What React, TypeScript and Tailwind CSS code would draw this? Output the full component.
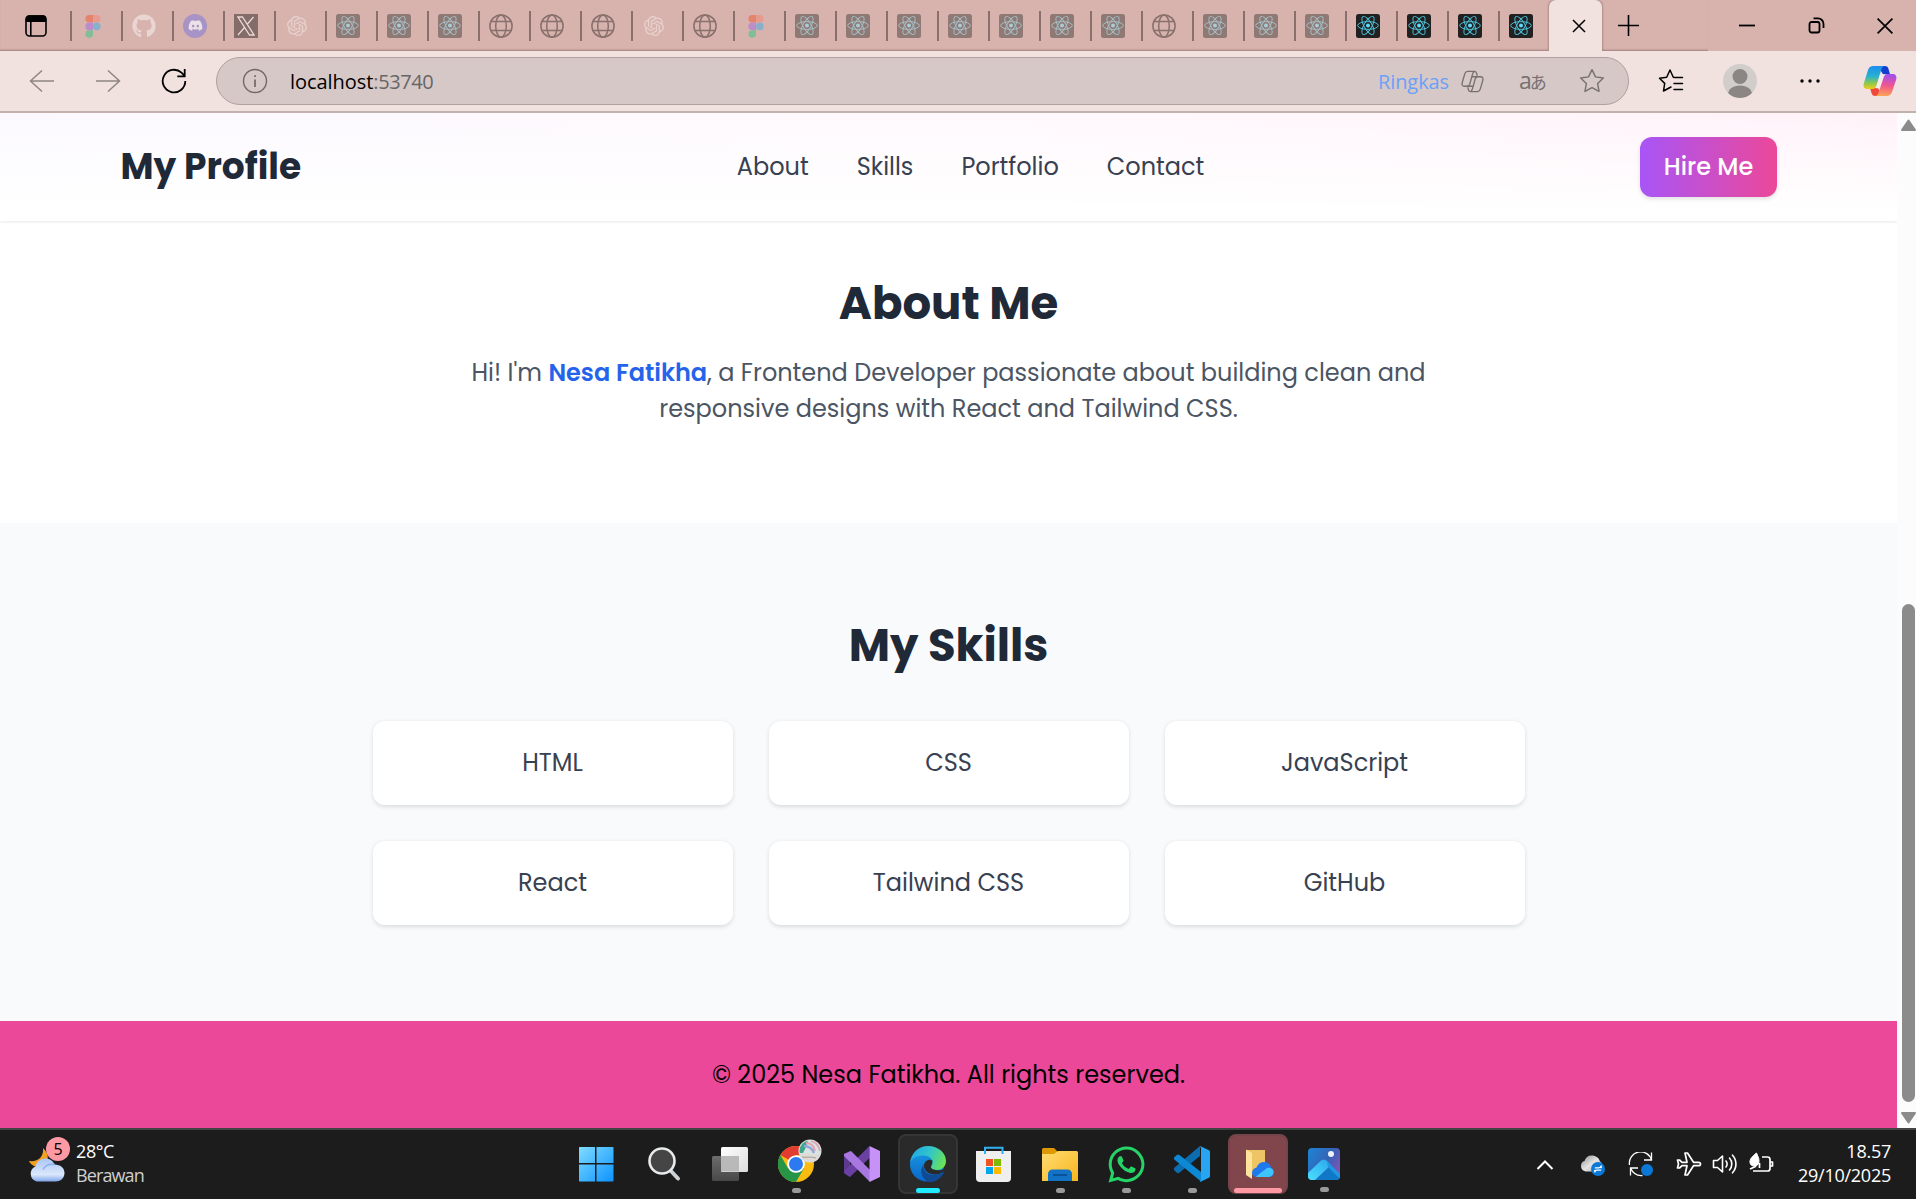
import type { ReactNode } from "react";
import { SiOpenai } from "react-icons/si";
import { FaGithub, FaDiscord, FaWhatsapp } from "react-icons/fa6";

/* ---------- tab favicons ---------- */

function ReactFavicon({ live }: { live?: boolean }) {
  return (
    <svg width="24" height="24" viewBox="0 0 24 24" fill="none">
      <rect width="24" height="24" rx="2.5" fill={live ? "#212121" : "#8f7975"} />
      <g stroke={live ? "#4cc3dc" : "#a5bfc6"} strokeWidth="0.95">
        <ellipse cx="12" cy="11.5" rx="10.3" ry="3.9" />
        <ellipse cx="12" cy="11.5" rx="10.3" ry="3.9" transform="rotate(60 12 11.5)" />
        <ellipse cx="12" cy="11.5" rx="10.3" ry="3.9" transform="rotate(120 12 11.5)" />
      </g>
      <circle cx="12" cy="11.5" r="2" fill={live ? "#61dafb" : "#a9ccd6"} />
    </svg>
  );
}

function GlobeFavicon() {
  return (
    <svg width="24" height="24" viewBox="0 0 24 24" fill="none" stroke="#89706c" strokeWidth="1.5">
      <circle cx="12" cy="12" r="11.1" />
      <ellipse cx="12" cy="12" rx="5.3" ry="11.1" />
      <path d="M1.9 7.6h20.2M1.9 16.4h20.2" />
    </svg>
  );
}

function FigmaFavicon() {
  return (
    <svg width="24" height="24" viewBox="0 0 24 24">
      <path d="M12 1H8.2a3.8 3.8 0 0 0 0 7.6H12z" fill="#e4846c" />
      <path d="M12 1h3.8a3.8 3.8 0 0 1 0 7.6H12z" fill="#e99a8e" />
      <path d="M12 8.6H8.2a3.8 3.8 0 0 0 0 7.6H12z" fill="#bd8dcb" />
      <circle cx="15.8" cy="12.4" r="3.8" fill="#86b0cb" />
      <path d="M8.2 16.2H12V20a3.8 3.8 0 1 1-3.8-3.8z" fill="#80bd98" />
    </svg>
  );
}

function XFavicon() {
  return (
    <span className="flex size-6 items-center justify-center bg-[#846c69]">
      <svg width="18" height="20" viewBox="0 0 18 20" fill="none" stroke="#e9d8d5" strokeWidth="1.3">
        <path d="M1 1h4.500l11.500 18h-4.500zM16.500 1L10 8.500M7.500 11.500L1 19" />
      </svg>
    </span>
  );
}

function DiscordFavicon() {
  return (
    <span className="flex size-6 items-center justify-center rounded-full bg-[#a793c6]">
      <FaDiscord className="size-[15px] text-[#ece1e4]" />
    </span>
  );
}

type TabKind = "figma" | "github" | "discord" | "x" | "openai" | "react" | "globe" | "live";

const favicons: Record<TabKind, ReactNode> = {
  figma: <FigmaFavicon />,
  github: <FaGithub className="size-6 text-[#e9d5d2]" />,
  discord: <DiscordFavicon />,
  x: <XFavicon />,
  openai: <SiOpenai className="size-5 text-[#e8d2ce]" />,
  react: <ReactFavicon />,
  globe: <GlobeFavicon />,
  live: <ReactFavicon live />,
};

const tabs: TabKind[] = [
  "figma", "github", "discord", "x", "openai",
  "react", "react", "react", "globe", "globe", "globe",
  "openai", "globe", "figma",
  "react", "react", "react", "react", "react", "react", "react",
  "globe", "react", "react", "react",
  "live", "live", "live", "live",
];

function TabStrip() {
  return (
    <div className="flex h-[51px] shrink-0 bg-[#d8b3ad]">
      <div className="flex flex-1 shadow-[inset_0_-2px_2px_-1px_#a07f7b]">
        <div className="flex w-[70px] items-center pl-[25px]">
          <svg width="22" height="22" viewBox="0 0 22 22" fill="none" stroke="#000" strokeWidth="1.6">
            <rect x="1" y="1" width="20" height="20" rx="3.4" />
            <path d="M1.5 3.5a2.5 2.5 0 0 1 2.5-2.5h14a2.5 2.5 0 0 1 2.5 2.5V6.2h-19z" fill="#000" />
            <path d="M5.8 6v15" />
          </svg>
        </div>
        {tabs.map((kind, i) => (
          <div key={i} className="flex w-[51px] items-center">
            <div className="h-[30px] w-[2px] bg-[#89706c]" />
            <div className="ml-[9px] flex size-6 items-center justify-center">{favicons[kind]}</div>
          </div>
        ))}
      </div>
      <div className="flex w-[53px] items-center justify-center rounded-t-[7px] bg-[#f1e2e0] pl-[6px] shadow-[0_0_2px_1px_#b08e89]">
        <svg width="14" height="14" viewBox="0 0 14 14" stroke="#000" strokeWidth="1.5">
          <path d="M1 1l12 12M13 1L1 13" />
        </svg>
      </div>
      <div className="flex w-[106px] items-center pl-[16px] shadow-[inset_0_-2px_2px_-1px_#a07f7b]">
        <svg width="21" height="21" viewBox="0 0 21 21" stroke="#000" strokeWidth="1.6">
          <path d="M10.500 0v21M0 10.500h21" />
        </svg>
      </div>
      <div className="flex w-[208px] items-center justify-between pr-[23px] pl-[31px]">
        <svg width="16" height="16" viewBox="0 0 16 16" stroke="#000" strokeWidth="1.8">
          <path d="M0 7.500h16" />
        </svg>
        <svg width="17" height="17" viewBox="0 0 17 17" fill="none" stroke="#000" strokeWidth="1.8">
          <rect x="1.5" y="5" width="10" height="10.5" rx="2" />
          <path d="M5.500 1.400h4.500a5.500 5.500 0 0 1 5.500 5.500V11" />
        </svg>
        <svg width="16" height="16" viewBox="0 0 16 16" stroke="#000" strokeWidth="1.7">
          <path d="M.6.6l14.800 14.800M15.400.6L.6 15.400" />
        </svg>
      </div>
    </div>
  );
}

/* ---------- toolbar ---------- */

function CopilotLogo() {
  return (
    <svg width="34" height="32" viewBox="0 0 34 32">
      <defs>
        <linearGradient id="cpA" x1="0" y1="0" x2="0" y2="1">
          <stop offset="0" stopColor="#1f8df0" />
          <stop offset=".45" stopColor="#27b2d0" />
          <stop offset=".75" stopColor="#8fc94a" />
          <stop offset="1" stopColor="#f0cc1c" />
        </linearGradient>
        <linearGradient id="cpB" x1=".4" y1="0" x2=".3" y2="1">
          <stop offset="0" stopColor="#a050f0" />
          <stop offset=".5" stopColor="#f0568e" />
          <stop offset="1" stopColor="#ffa552" />
        </linearGradient>
      </defs>
      <path d="M15 1h6.500c2.500 0 3.500 1.300 4 3l1.500 5.200H20z" fill="#1140cf" />
      <path d="M19 31h-6.500c-2.500 0-3.500-1.300-4-3L7 23h8z" fill="#f0483a" />
      <path d="M10.500 1H22c-2 0-3 1.500-3.600 3.400L13.200 21c-.6 1.800-1.800 3-3.700 3H4.200C1 24 0 21.500.8 18.500L5 5c.9-2.600 2.600-4 5.500-4z" fill="url(#cpA)" />
      <path d="M23.500 31H12c2 0 3-1.500 3.600-3.400L20.800 12c.6-1.800 1.800-3 3.700-3h5.300c3.200 0 4.200 2.500 3.400 5.500L29 27c-.9 2.600-2.600 4-5.500 4z" fill="url(#cpB)" />
      <path d="M17 9.500h5.500c-1.200.6-1.900 1.600-2.300 2.900L17.300 21c-.5 1.500-1.400 2.300-2.800 2.300h-2c.7-.6 1.100-1.400 1.400-2.300z" fill="#f6eceb" />
    </svg>
  );
}

const starPath = "M12 1.500l3.200 6.700 7.300 1-5.300 5.100 1.300 7.300-6.500-3.500-6.500 3.500 1.300-7.300L1.500 9.200l7.300-1z";

function Toolbar() {
  return (
    <div className="flex h-[62px] shrink-0 items-center border-b-2 border-[#c2b0ad] bg-[#f1e2e0] font-['Open_Sans',sans-serif]">
      <svg className="ml-[29px]" width="26" height="26" viewBox="0 0 26 26" fill="none" stroke="#8f8583" strokeWidth="1.5">
        <path d="M25 13H1.500M13 2.500L1.500 13 13 23.500" />
      </svg>
      <svg className="ml-10" width="26" height="26" viewBox="0 0 26 26" fill="none" stroke="#8f8583" strokeWidth="1.5">
        <path d="M1 13h23.500M13 2.500L24.500 13 13 23.500" />
      </svg>
      <svg className="ml-10" width="26" height="26" viewBox="0 0 26 26" fill="none" stroke="#000" strokeWidth="1.8">
        <path d="M24.300 13A11.300 11.300 0 1 1 20.500 4.600L23.700 8M23.700 1v7.400h-7.400" />
      </svg>
      <div className="ml-[29px] flex h-12 w-[1413px] items-center rounded-full border-[1.5px] border-[#b0a19f] bg-[#d6c8c7] pr-[23px] pl-[25px]">
        <svg width="26" height="26" viewBox="0 0 26 26" fill="none" stroke="#6f6866" strokeWidth="1.4">
          <circle cx="13" cy="13" r="11.500" />
          <path d="M13 11.500V19M13 7.200V9" strokeWidth="1.700" />
        </svg>
        <div className="ml-[22px] pt-[2px] text-[20px] leading-7 tracking-[-0.05px] text-black">
          localhost<span className="tracking-[-0.4px] text-[#666]">:53740</span>
        </div>
        <div className="ml-auto pt-[2px] text-[20px] leading-7 tracking-[-0.1px] text-[#6ba0f8]">Ringkas</div>
        <svg className="ml-3" width="23" height="23" viewBox="0 0 24 24" fill="none" stroke="#777170" strokeWidth="1.4" strokeLinejoin="round">
          <path d="M7 1.500h7c1.300 0 1.900.7 2.200 1.800L17 6M7 1.500c-1.600 0-2.500.8-3 2.300L1.300 13c-.7 2.400.1 4 2.200 4h3c1.500 0 2.200-.8 2.600-2.100L12 4.500c.5-1.700 1.200-3 2.500-3" />
          <path d="M17 22.500h-7c-1.300 0-1.900-.7-2.200-1.800L7 18M17 22.500c1.600 0 2.500-.8 3-2.300L22.700 11c.7-2.400-.1-4-2.200-4h-3c-1.500 0-2.200.8-2.600 2.100L12 19.500c-.5 1.700-1.200 3-2.500 3M11 7h7M6 17h7" />
        </svg>
        <div className="mr-[34px] ml-[35px] flex w-[26px] items-baseline pb-[2px] leading-7 text-[#777170]">
          <span className="text-[23px]">a</span>
          <span className="-ml-[2px] font-['Noto_Sans_CJK_JP',sans-serif] text-[17px] leading-5">あ</span>
        </div>
        <svg width="26" height="26" viewBox="0 0 24 24" fill="none" stroke="#777170" strokeWidth="1.300" strokeLinejoin="round">
          <path d={starPath} />
        </svg>
      </div>
      <svg className="ml-[29px]" width="26" height="26" viewBox="0 0 26 26" fill="none" stroke="#000" strokeWidth="1.500" strokeLinejoin="round" strokeLinecap="round">
        <path d="M17 9.500l-1.700-.3L12 2 8.700 9.200 1.500 10.200l5.200 5.200L5.500 23l6.500-3.500M17 9.500h7.500M16 15.500h8.500M16 21.500h8.500M13 19l-1 .5" />
      </svg>
      <svg className="ml-[39px]" width="34" height="34" viewBox="0 0 34 34">
        <defs>
          <clipPath id="avatar"><circle cx="17" cy="17" r="17" /></clipPath>
        </defs>
        <circle cx="17" cy="17" r="17" fill="#d0cdcb" />
        <g clipPath="url(#avatar)" fill="#8b8684">
          <circle cx="17" cy="12.500" r="7.500" />
          <path d="M5 31c0-6 5-9.500 12-9.500S29 25 29 31c-3 2-7 3-12 3S8 33 5 31z" />
        </g>
      </svg>
      <svg className="ml-[43px]" width="20" height="6" viewBox="0 0 20 6" fill="#000">
        <circle cx="2" cy="3" r="1.700" /><circle cx="10" cy="3" r="1.700" /><circle cx="18" cy="3" r="1.700" />
      </svg>
      <div className="ml-[43px]"><CopilotLogo /></div>
    </div>
  );
}

/* ---------- web page ---------- */

const navLinks = ["About", "Skills", "Portfolio", "Contact"];

function PageHeader() {
  return (
    <header className="z-10 flex h-[108px] shrink-0 items-center justify-between bg-[linear-gradient(to_bottom,transparent,#fff_90%),linear-gradient(to_right,#fbf9ff,#fff9fd_50%,#fff2f9)] pr-[120px] pl-[120.5px] shadow-[0_1px_3px_rgba(0,0,0,0.09)]">
      <h1 className="text-4xl font-bold text-[#1f2937]">My Profile</h1>
      <nav className="flex gap-12 text-2xl leading-9 text-[#374151]">
        {navLinks.map((label) => (
          <a key={label}>{label}</a>
        ))}
      </nav>
      <button className="h-[60px] w-[137px] rounded-xl bg-[linear-gradient(to_right,#a855f7,#ec4899)] text-2xl font-medium whitespace-nowrap text-white shadow-[0_2px_4px_rgba(0,0,0,0.12)]">
        Hire Me
      </button>
    </header>
  );
}

const skills = ["HTML", "CSS", "JavaScript", "React", "Tailwind CSS", "GitHub"];

function Page() {
  return (
    <div className="flex flex-1 flex-col overflow-hidden bg-white font-['Poppins','Inter',sans-serif]">
      <PageHeader />
      <section className="flex h-[302px] shrink-0 flex-col items-center pt-14 text-center">
        <h2 className="text-[45px] leading-[54px] font-bold text-[#1f2937]">About Me</h2>
        <p className="mt-6 w-[1008px] text-2xl leading-9 text-[#4b5563]">
          Hi! I'm <span className="font-semibold text-[#2563eb]">Nesa Fatikha</span>, a Frontend Developer
          passionate about building clean and responsive designs with React and Tailwind CSS.
        </p>
      </section>
      <section className="flex h-[498px] shrink-0 flex-col items-center bg-[#f9fafb] pt-24">
        <h2 className="text-[45px] leading-[54px] font-bold text-[#1f2937]">My Skills</h2>
        <div className="mt-12 grid w-[1152px] grid-cols-3 gap-9">
          {skills.map((name) => (
            <div key={name} className="rounded-xl bg-white p-6 text-center text-2xl leading-9 text-[#374151] shadow-[0_1.5px_4px_rgba(0,0,0,0.12)]">
              {name}
            </div>
          ))}
        </div>
      </section>
      <footer className="flex-1 bg-[#ec4899] pt-9 text-center text-2xl leading-9 text-black">
        © 2025 Nesa Fatikha. All rights reserved.
      </footer>
    </div>
  );
}

function Scrollbar() {
  return (
    <div className="flex w-[19px] shrink-0 flex-col items-center bg-[#fcfcfc] pt-[6px] pb-[4px] pl-[3px]">
      <svg width="15" height="12" viewBox="0 0 15 12" fill="#8b8b8b" stroke="#8b8b8b" strokeWidth="2" strokeLinejoin="round">
        <path d="M7.500 1.500L14 11H1z" />
      </svg>
      <div className="mt-[473px] h-[498px] w-[13px] rounded-full bg-[#8b8b8b]" />
      <svg className="mt-auto" width="15" height="12" viewBox="0 0 15 12" fill="#8b8b8b" stroke="#8b8b8b" strokeWidth="2" strokeLinejoin="round">
        <path d="M7.500 10.500L14 1H1z" />
      </svg>
    </div>
  );
}

/* ---------- taskbar ---------- */

function WindowsLogo() {
  return (
    <svg width="36" height="36" viewBox="0 0 36 36">
      <defs>
        <linearGradient id="win" x1="0" y1="0" x2="1" y2="1">
          <stop offset="0" stopColor="#7fdcff" />
          <stop offset="1" stopColor="#0c93ff" />
        </linearGradient>
      </defs>
      <path d="M1.500 1H17v16H1V1.500zM18.500 1H35l.5.5V17h-17zM1 18.500h16v17H1.500L1 35zM18.500 18.500h17V35l-.5.5H18.500z" fill="url(#win)" />
    </svg>
  );
}

function SearchIcon() {
  return (
    <svg width="36" height="36" viewBox="0 0 36 36" fill="none">
      <path d="M24 24l8 8.500" stroke="#cfd2d4" strokeWidth="4" strokeLinecap="round" />
      <circle cx="16" cy="15" r="12.500" fill="#454545" stroke="#e8eaeb" strokeWidth="2.600" />
    </svg>
  );
}

function TaskViewIcon() {
  return (
    <svg width="36" height="36" viewBox="0 0 36 36">
      <defs>
        <linearGradient id="tvF" x1="0" y1="0" x2="1" y2="1">
          <stop offset="0" stopColor="#fff" /><stop offset="1" stopColor="#dcdcdc" />
        </linearGradient>
        <linearGradient id="tvB" x1="0" y1="0" x2="0" y2="1">
          <stop offset="0" stopColor="#6c6c6c" /><stop offset="1" stopColor="#484848" />
        </linearGradient>
      </defs>
      <rect x="0" y="10" width="27" height="25" rx="1.500" fill="url(#tvB)" />
      <rect x="9" y="1" width="27" height="25" rx="1.500" fill="url(#tvF)" />
      <path d="M9 10h18v15.500H9z" fill="#b9b9b9" />
    </svg>
  );
}

function ChromeIcon() {
  return (
    <svg className="overflow-visible" width="36" height="36" viewBox="0 0 36 36">
      <defs>
        <clipPath id="profClip"><circle cx="32" cy="5" r="10.500" /></clipPath>
      </defs>
      <circle cx="18" cy="18" r="18" fill="#fbbc12" />
      <path d="M18 18L2.410 9A18 18 0 0 1 33.600 9H18z" fill="#e23b30" />
      <path d="M2.410 9A18 18 0 0 0 18 36l7.800-13.500L18 18l-7.800 4.500z" fill="#279547" />
      <circle cx="18" cy="18" r="8.800" fill="#fff" />
      <circle cx="18" cy="18" r="7" fill="#2b7af0" />
      <circle cx="32" cy="5" r="11.500" fill="#d9dcda" />
      <g clipPath="url(#profClip)">
        <circle cx="32" cy="5" r="10.500" fill="#d9e4e2" />
        <path d="M20-6h10l-2 7-3 6h-5z" fill="#3aa78b" />
        <path d="M28-3c5 0 8 3 9 8M33-5c5 1 8 5 9 10" stroke="#e0a3b4" strokeWidth="2" fill="none" />
        <path d="M26 0c5 0 8 2 10 7" stroke="#93a6dc" strokeWidth="2.500" fill="none" />
        <path d="M21 8c4 1 8-2 12 0 4 1.500 7 0 11 0v9H21z" fill="#dedbd6" />
        <path d="M24 11c4 1 8-1 14 1" stroke="#a39c94" strokeWidth="1" fill="none" />
      </g>
    </svg>
  );
}

function VisualStudioIcon() {
  return (
    <svg width="36" height="36" viewBox="0 0 36 36">
      <path d="M0 8l6-3v26l-6-4z" fill="#5c3a8f" />
      <path d="M6 31L25.500 12V0L0 25v2z" fill="#6a41a3" />
      <path d="M0 8l7-3 19 19v12L0 10z" fill="#a878e0" />
      <path d="M25.500 0L36 5v26l-10.500 5z" fill="#c792f8" />
    </svg>
  );
}

function EdgeIcon() {
  return (
    <svg width="36" height="36" viewBox="0 0 36 36">
      <defs>
        <linearGradient id="edT" x1="0" y1=".3" x2="1" y2=".6">
          <stop offset="0" stopColor="#1fa7e6" /><stop offset=".5" stopColor="#32c5c9" /><stop offset="1" stopColor="#6be354" />
        </linearGradient>
        <linearGradient id="edL" x1=".3" y1="0" x2=".3" y2="1">
          <stop offset="0" stopColor="#1b9de2" /><stop offset="1" stopColor="#0a66c9" />
        </linearGradient>
      </defs>
      <circle cx="17" cy="18.500" r="17" fill="url(#edL)" />
      <path d="M0 17C1 7 8.500 0 18 0c10.500 0 18 7 18 15 0 6-4.500 9-9 9-3.500 0-6-1.200-6-3 0-1.200 1.500-1.800 1.500-5C22.500 12 18 9.500 13 9.500 6 9.500 1.500 13 0 17z" fill="url(#edT)" />
      <path d="M22.300 14.500c-3.300-2-8.300.5-8.300 5.500 0 5 5 9 12 8.500 3-.3 6-1.500 8-3.500l2 3V22c-2.500 2-5.500 2.500-9 2.200-3.500-.2-6-1.400-6-3.200 0-1.500 1.600-2.500 1.300-6.500z" fill="#2a2a2a" />
      <path d="M14 18c-2 6 3 11.500 11 10.800 3.500-.3 6-1.800 7.500-2.800 1-.7 1.600.3 1.200 1.200C31 32.500 25 36.500 18.500 36 12 33 8.500 25 14 18z" fill="#104a92" />
    </svg>
  );
}

function StoreIcon() {
  return (
    <svg width="36" height="36" viewBox="0 0 36 36">
      <path d="M0 5h35v27a4 4 0 0 1-4 4H4a4 4 0 0 1-4-4z" fill="#efefef" />
      <path d="M9 8V1.800h17.500V8" fill="none" stroke="#2fb1f0" strokeWidth="2" />
      <path d="M10 13h7v7h-7z" fill="#f25022" />
      <path d="M18 13h7v7h-7z" fill="#7fba00" />
      <path d="M10 21h7v7h-7z" fill="#00a4ef" />
      <path d="M18 21h7v7h-7z" fill="#ffb900" />
    </svg>
  );
}

function ExplorerIcon() {
  return (
    <svg width="36" height="36" viewBox="0 0 36 36">
      <defs>
        <linearGradient id="fold" x1="0" y1="0" x2="1" y2="1">
          <stop offset="0" stopColor="#ffdc74" /><stop offset="1" stopColor="#f8b61c" />
        </linearGradient>
      </defs>
      <path d="M0 3.500A1.500 1.500 0 0 1 1.500 2H12l4 4v4H0z" fill="#dd9a04" />
      <path d="M0 8h12l4-3h18.500A1.500 1.500 0 0 1 36 6.500V35H0z" fill="url(#fold)" />
      <path d="M6 35V28a4.500 4.500 0 0 1 4.500-4.500h15A4.500 4.500 0 0 1 30 28v7z" fill="#1272c6" />
      <path d="M11 29h14" stroke="#084a8c" strokeWidth="1.600" />
    </svg>
  );
}

function VsCodeIcon() {
  return (
    <svg width="36" height="36" viewBox="0 0 36 36">
      <path d="M26 0v10L5 27 3.500 27.300 0 24v-2z" fill="#0b6cb0" />
      <path d="M.5 11l3-2.500L5.500 9 27 26v9.500L.3 13.500c-.6-.8-.5-1.800.2-2.500z" fill="#0c88d4" />
      <path d="M26 0l9 4.200c.6.300 1 1 1 1.800v24c0 .8-.4 1.500-1 1.800L26 36c-.8-.3 1-1 1-2.500v-31C27 1 25.500.3 26 0z" fill="#27a5f3" />
    </svg>
  );
}

function CloudFolderIcon() {
  return (
    <svg width="36" height="36" viewBox="0 0 36 36">
      <path d="M6 4h19v23H6z" fill="#edc565" />
      <path d="M6 3.500L12 7v26l-6-4z" fill="#ffe29b" />
      <path d="M12 27c0-3 2-5 4.500-5.500 1.500-3.800 4.500-5.500 7.500-5.500 4 0 6.500 2.500 7.300 6 2.300.5 2.700 2.500 2.700 4 0 3.500-2.500 5-5 5H17c-3 0-5-1.500-5-4z" fill="#1f78ec" />
      <path d="M16 30.500L27 22c4-1 6.500 1.500 6.500 4s-2 5-5 5H17z" fill="#3ec4fb" />
    </svg>
  );
}

function PhotosIcon() {
  return (
    <svg width="32" height="32" viewBox="0 0 32 32">
      <defs>
        <linearGradient id="phB" x1="0" y1="0" x2="1" y2=".6">
          <stop offset="0" stopColor="#1c86d6" /><stop offset=".6" stopColor="#3563b6" /><stop offset="1" stopColor="#7b55b4" />
        </linearGradient>
        <linearGradient id="phM" x1="0" y1="1" x2="1" y2="0">
          <stop offset="0" stopColor="#4be0ff" /><stop offset="1" stopColor="#2ba5ec" />
        </linearGradient>
        <clipPath id="phC"><rect width="32" height="32" rx="4" /></clipPath>
      </defs>
      <g clipPath="url(#phC)">
        <rect width="32" height="32" fill="url(#phB)" />
        <path d="M8 32l14-14 10 9v5z" fill="#0f79c8" />
        <path d="M0 25l12.500-12c2-2 4.500-2 6.500 0l4 4L7 32H0z" fill="url(#phM)" />
        <path d="M19 13l13 13v5l-12-12z" fill="#2196e2" />
        <circle cx="23" cy="6" r="3" fill="#eef2fb" />
      </g>
    </svg>
  );
}

type Mark = "none" | "dot" | "edge" | "alert";

const apps: { icon: ReactNode; mark: Mark }[] = [
  { icon: <SearchIcon />, mark: "none" },
  { icon: <TaskViewIcon />, mark: "none" },
  { icon: <ChromeIcon />, mark: "dot" },
  { icon: <VisualStudioIcon />, mark: "none" },
  { icon: <EdgeIcon />, mark: "edge" },
  { icon: <StoreIcon />, mark: "none" },
  { icon: <ExplorerIcon />, mark: "dot" },
  { icon: <FaWhatsapp className="size-[41px] shrink-0 text-[#25d366]" />, mark: "dot" },
  { icon: <VsCodeIcon />, mark: "dot" },
  { icon: <CloudFolderIcon />, mark: "alert" },
  { icon: <PhotosIcon />, mark: "dot" },
];

const markStyles: Record<Mark, string> = {
  none: "h-[5px] w-0",
  dot: "h-[5px] w-[9px] rounded-full bg-[#9a9a9a]",
  edge: "h-[5px] w-6 rounded-full bg-[#1fecff]",
  alert: "h-[5px] w-12 rounded-full bg-[#ff9aa5]",
};

const tileStyles: Record<Mark, string> = {
  none: "border-transparent",
  dot: "border-transparent",
  edge: "border-[#353535] bg-[#2a2a2a]",
  alert: "border-[#74444a] bg-[#80464c]",
};

function Weather() {
  return (
    <div className="flex items-center pb-[3px] pl-[27px]">
      <div className="relative">
        <svg width="40" height="44" viewBox="0 0 40 44">
          <defs>
            <linearGradient id="cloud" x1="0" y1="0" x2="0" y2="1">
              <stop offset="0" stopColor="#a9c6f3" /><stop offset=".7" stopColor="#dbe7fb" /><stop offset="1" stopColor="#7fa6ea" />
            </linearGradient>
          </defs>
          <path d="M16 7c4 4 6 8 4 14-3 7-14 7-18-1 9 1 15-4 14-13z" fill="#f0a022" />
          <path d="M9.500 40.500a8 8 0 0 1-1-15c1-5 5-8 10-8 4.500 0 7.500 2.500 9 6 6 0 10 3.500 10 8.500s-4 8.500-9 8.500z" fill="url(#cloud)" />
          <path d="M16 28.500c2-4 6-6 12-5" fill="none" stroke="#8db0ec" strokeWidth="1.500" />
        </svg>
        <div className="absolute -top-[4px] left-[19px] flex size-6 items-center justify-center rounded-full bg-[#ff99a4] text-[16px] leading-none text-black">5</div>
      </div>
      <div className="ml-[9px] text-[18px] leading-6 tracking-[-0.4px] text-white">
        <div>28°C</div>
        <div className="tracking-[-0.9px] text-[#cfcfcf]">Berawan</div>
      </div>
    </div>
  );
}

function Tray() {
  return (
    <div className="flex items-center pr-[25px] text-white">
      <svg width="18" height="12" viewBox="0 0 18 12" fill="none" stroke="#fff" strokeWidth="2">
        <path d="M1.500 10L9 2.500l7.500 7.500" />
      </svg>
      <svg className="ml-[26px]" width="26" height="26" viewBox="0 0 26 26">
        <defs>
          <linearGradient id="od" x1="0" y1="0" x2="1" y2="1">
            <stop offset="0" stopColor="#8e8e8e" /><stop offset=".5" stopColor="#e4e4e4" /><stop offset="1" stopColor="#a8a8a8" />
          </linearGradient>
        </defs>
        <path d="M7 19.500c-4 0-6-2.500-6-5.500 0-3 1.500-4.500 3.500-5C5.500 5.500 8 3.500 11.500 3.500c4.500 0 7.500 2.500 8.500 6 1.500 1 2.500 2 2.500 4.500s-2 5.500-4.500 5.500z" fill="url(#od)" />
        <circle cx="18" cy="17" r="7" fill="#0a78d6" />
        <path d="M14.800 15.800h4.200c1 0 1.500-.5 2.200-1.800M21.200 18.200H17c-1 0-1.500.5-2.200 1.800M21.200 13.500v2.800M14.800 20.500v-2.800" fill="none" stroke="#fff" strokeWidth="1.300" />
      </svg>
      <svg className="ml-[22px]" width="26" height="26" viewBox="0 0 26 26" fill="none" stroke="#fff" strokeWidth="1.300">
        <path d="M1.500 13A11.300 11.300 0 0 1 23.500 8M23.500 .5V8H16M2.500 23.500V16H10M2.500 16c2.500 5.500 7 8 12 7.500" />
        <circle cx="19" cy="18" r="6" fill="#0a78d6" stroke="none" />
      </svg>
      <svg className="ml-[22px]" width="26" height="26" viewBox="0 0 26 26" fill="none" stroke="#fff" strokeWidth="1.700" strokeLinejoin="round">
        <path d="M1.500 8h2L6 10.300h5L9 1h2.500l6 9.300h5c1.300 0 2 .8 2 1.700s-.7 1.700-2 1.700h-5l-6 9.300H9l2-9.300H6L3.500 16h-2l1-4z" />
      </svg>
      <svg className="ml-[10px]" width="26" height="26" viewBox="0 0 26 26" fill="none" stroke="#fff" strokeWidth="1.600" strokeLinejoin="round" strokeLinecap="round">
        <path d="M1.500 8.500h4l5-4.500v16l-5-4.500h-4zM14 9a5 5 0 0 1 0 6M17.500 6a9 9 0 0 1 0 12M20.500 3.200a13 13 0 0 1 0 17.600" />
      </svg>
      <svg className="ml-[10px]" width="26" height="26" viewBox="0 0 26 26" fill="none" stroke="#fff" strokeWidth="1.700" strokeLinejoin="round">
        <path d="M14 5h5.500A2.500 2.500 0 0 1 22 7.500v9a2.500 2.500 0 0 1-2.500 2.500H5M22 10h2.500v4H22" />
        <path d="M8.500 1C4 4.500 1.500 7.500 2 10.500c.3 2.500 2 3.500 4 3.500 3.500 0 5-2 5-5 0-3.500-1.500-5-2.500-8z" fill="#fff" strokeWidth="1" />
        <path d="M7.500 9v5.500L2 17M11.500 11v5" />
      </svg>
      <div className="mb-[4px] ml-[20px] w-[97px] text-right text-[18px] leading-6 tracking-[-0.25px] whitespace-nowrap">
        <div>18.57</div>
        <div>29/10/2025</div>
      </div>
    </div>
  );
}

function Taskbar() {
  return (
    <div className="grid h-[71px] shrink-0 grid-cols-[566px_790px_1fr] border-t-2 border-[#434343] bg-[#1c1c1c] font-['Open_Sans',sans-serif]">
      <Weather />
      <div className="flex items-start gap-[6px] pt-1">
        <div className="mr-[2px] flex size-[60px] shrink-0 justify-center pt-3">
          <WindowsLogo />
        </div>
        {apps.map((app, i) => (
          <div key={i} className={`flex size-[60px] shrink-0 flex-col items-center rounded-lg border-2 pt-[10px] ${tileStyles[app.mark]}`}>
            <div className="flex size-9 items-center justify-center">{app.icon}</div>
            <div className={`mt-[6px] shrink-0 ${markStyles[app.mark]}`} />
          </div>
        ))}
      </div>
      <div className="flex justify-end"><Tray /></div>
    </div>
  );
}

export default function App() {
  return (
    <div className="flex h-[1199px] w-[1916px] flex-col overflow-hidden">
      <TabStrip />
      <Toolbar />
      <div className="flex min-h-0 flex-1">
        <Page />
        <Scrollbar />
      </div>
      <Taskbar />
    </div>
  );
}
